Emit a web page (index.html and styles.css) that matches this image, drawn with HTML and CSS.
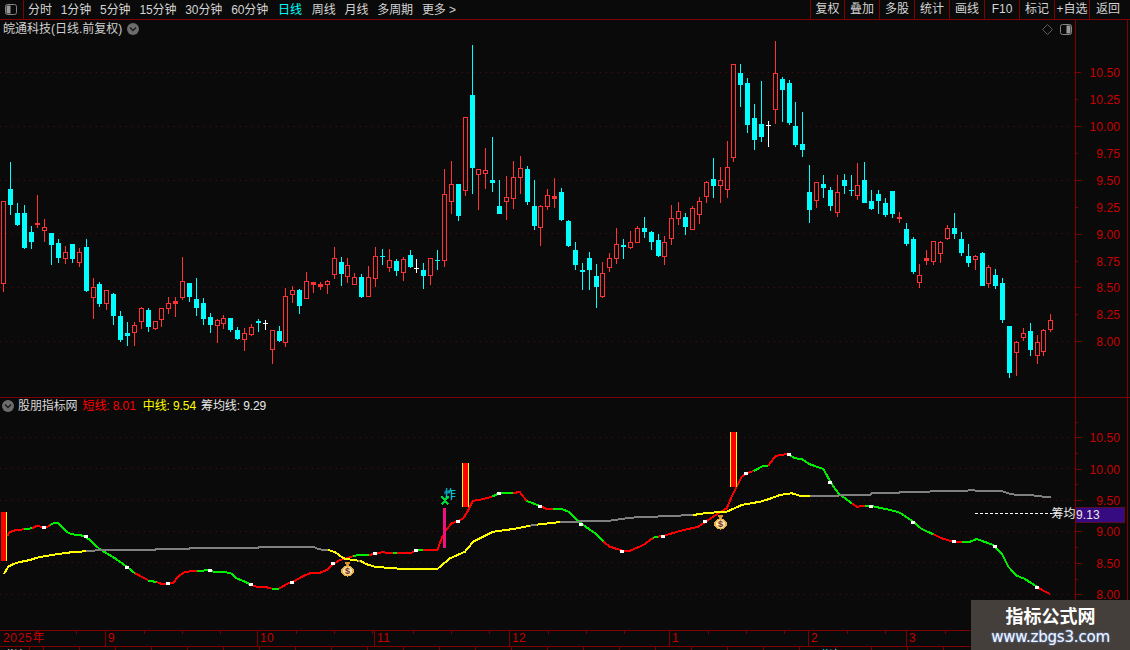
FILE: index.html
```html
<!DOCTYPE html>
<html lang="zh">
<head>
<meta charset="utf-8">
<title>皖通科技</title>
<link rel="stylesheet" href="styles.css">
</head>
<body>
<div class="app">
  <header class="topbar">
    <div class="side-toggle">
      <svg class="panel-icon" width="12" height="11" viewBox="0 0 12 11"><rect class="pi-fill" x="1.5" y="1.5" width="4" height="8"/><rect class="pi-box" x=".5" y=".5" width="11" height="10" rx="2"/></svg>
    </div>
    <nav class="periods">
      <span>分时</span><span>1分钟</span><span>5分钟</span><span>15分钟</span><span>30分钟</span><span>60分钟</span><span class="active">日线</span><span>周线</span><span>月线</span><span>多周期</span><span>更多 &gt;</span>
    </nav>
    <div class="tools">
      <span class="tool first">复权</span><span class="tool">叠加</span><span class="tool">多股</span><span class="tool">统计</span><span class="tool">画线</span><span class="tool">F10</span><span class="tool">标记</span><span class="tool">+自选</span><span class="tool last">返回</span>
    </div>
  </header>

  <section class="panel price-panel">
    <div class="plot">
      <svg id="price" class="chart" viewBox="0 20 1075 377" width="1075" height="377"></svg>
      <div class="chart-title">皖通科技(日线.前复权)
        <svg class="round-btn" width="12" height="12" viewBox="0 0 12 12"><circle class="rb-bg" cx="6" cy="6" r="6"/><path class="rb-ch" d="M3 4.5 6 7.5 9 4.5"/></svg>
      </div>
      <div class="chart-tools">
        <svg width="11" height="11" viewBox="0 0 11 11"><path class="diamond" d="M5.5 .5 10.5 5.5 5.5 10.5 .5 5.5Z"/></svg>
        <svg class="panel-icon" width="12" height="11" viewBox="0 0 12 11"><rect class="pi-fill" x="6.5" y="1.5" width="4" height="8"/><rect class="pi-box" x=".5" y=".5" width="11" height="10" rx="2"/></svg>
      </div>
    </div>
    <div class="axis price-axis">
      <div>10.50</div><div>10.25</div><div>10.00</div><div>9.75</div><div>9.50</div><div>9.25</div><div>9.00</div><div>8.75</div><div>8.50</div><div>8.25</div><div>8.00</div>
    </div>
    <div class="edge"></div>
  </section>

  <section class="panel ind-panel">
    <div class="plot">
      <svg id="ind" class="chart" viewBox="0 398 1075 232" width="1075" height="232">
        <defs>
          <symbol id="bag" viewBox="0 0 14 16">
            <path class="bag-neck" d="M4 0.5h6L8.6 4.5H5.4Z"/>
            <ellipse class="bag-body" cx="7" cy="10" rx="6.4" ry="5.6"/>
            <ellipse class="bag-in" cx="7" cy="10" rx="4.6" ry="4"/>
            <text class="bag-sign" x="7" y="13.4" text-anchor="middle">$</text>
          </symbol>
        </defs>
        <g id="ind-grid"></g>
        <g id="ind-lines"></g>
        <rect class="bar-edge" x="6" y="512" width="1" height="49"/>
        <rect class="bar-red" x="1" y="512" width="5" height="49"/>
        <rect class="bar-edge" x="462" y="463" width="7" height="44"/>
        <rect class="bar-red" x="463" y="463" width="5" height="44"/>
        <rect class="bar-edge" x="730" y="432" width="7" height="55"/>
        <rect class="bar-red" x="731" y="432" width="5" height="55"/>
        <rect class="bar-pink" x="443" y="508" width="3" height="40"/>
        <text class="zha" x="444" y="499">炸</text>
        <path class="cross-x" d="M441.5 496.5 448.5 504.5M448.5 496.5 441.5 504.5"/>
        <use href="#bag" x="340.5" y="561" width="14" height="16"/>
        <use href="#bag" x="713.5" y="514" width="14" height="16"/>
        <line class="dash" x1="975" y1="513.5" x2="1052" y2="513.5"/>
        <text class="avg-tag" x="1051.5" y="518">筹均</text>
      </svg>
      <div class="legend">
        <svg class="round-btn" width="12" height="12" viewBox="0 0 12 12"><circle class="rb-bg" cx="6" cy="6" r="6"/><path class="rb-ch" d="M3 4.5 6 7.5 9 4.5"/></svg>
        <span class="lg-name">股朋指标网</span>
        <span class="lg-red">短线: 8.01</span>
        <span class="lg-yellow">中线: 9.54</span>
        <span class="lg-white">筹均线: 9.29</span>
      </div>
    </div>
    <div class="axis ind-axis">
      <div>10.50</div><div>10.00</div><div>9.50</div><div>9.00</div><div>8.50</div><div>8.00</div>
      <span class="price-tag">9.13</span>
    </div>
    <div class="edge"></div>
  </section>

  <div class="dates">
    <span class="d d-y">2025年</span><span class="d d-9">9</span><span class="d d-10">10</span><span class="d d-11">11</span><span class="d d-12">12</span><span class="d d-1">1</span><span class="d d-2">2</span><span class="d d-3">3</span>
  </div>
  <div class="tabs"><span class="tab-first">指标</span><span class="tab-cyan">指标</span></div>

  <aside class="watermark">
    <div class="wm-title">指标公式网</div>
    <div class="wm-url">www.zbgs3.com</div>
  </aside>
</div>
<script src="chart.js"></script>
</body>
</html>
```
FILE: styles.css
```css
* { box-sizing: border-box; }
html, body { margin: 0; height: 100%; overflow: hidden; background: #0a0a0a; }
body { font: 12px/16px "Liberation Sans", "Noto Sans CJK SC", sans-serif; color: #d4d4d4; }
.app { position: relative; width: 1130px; height: 650px; display: flex; flex-direction: column; overflow: hidden; }

.topbar { flex: 0 0 20px; display: flex; align-items: stretch; border-bottom: 1px solid #800000; padding-right: 4px; }
.side-toggle { flex: 0 0 24px; border-right: 1px solid #800000; display: flex; align-items: center; padding-left: 5px; }
.periods { display: flex; align-items: center; gap: 9px; padding-left: 4px; letter-spacing: -.12px; }
.periods .active { color: #00ffff; margin-left: 1px; margin-right: 1px; }
.tools { margin-left: auto; display: flex; }
.tool { flex: 0 0 35px; border-left: 1px solid #800000; text-align: center; line-height: 19px; }
.tool.first { flex-basis: 34px; }
.tool.last { flex-basis: 37px; }
.pi-box { fill: none; stroke: #858585; }
.pi-fill { fill: #9a9a9a; }

.panel { display: grid; grid-template-columns: 1075px 52px 3px; }
.price-panel { flex: 0 0 378px; height: 378px; border-bottom: 1px solid #800000; }
.ind-panel { flex: 0 0 232px; }
.plot { position: relative; overflow: hidden; }
.chart { display: block; shape-rendering: crispEdges; }

.chart-title { position: absolute; top: 1px; left: 3px; display: flex; align-items: center; gap: 5px; white-space: nowrap; color: #cfcfcf; }
.round-btn { flex: none; }
.rb-bg { fill: #6c6c6c; }
.rb-ch { fill: none; stroke: #1c1c1c; stroke-width: 1.4; }
.chart-tools { position: absolute; top: 4px; right: 3px; display: flex; gap: 7px; }
.diamond { fill: none; stroke: #5e5e5e; }

.legend { position: absolute; top: 0; left: 2px; display: flex; align-items: center; gap: 7px; white-space: nowrap; letter-spacing: -.1px; }
.lg-name { margin-left: -3px; margin-right: -2px; color: #d8d8d8; }
.lg-red { color: #ff0000; }
.lg-yellow { color: #ffff00; margin-right: -2px; }
.lg-white { color: #e8e8e8; }

.axis { position: relative; border-left: 1px solid #800000; display: flex; flex-direction: column; color: #c80000; letter-spacing: .1px; }
.axis div { position: relative; display: flex; align-items: center; justify-content: flex-end; padding: 2px 7px 0 0; }
.axis div::before { content: ""; position: absolute; left: 0; top: 50%; width: 5px; height: 1px; background: #800000; }
.price-axis { padding-top: 38.85px; }
.price-axis div { flex: 0 0 26.9px; }
.price-axis div:nth-child(even)::before { width: 2px; }
.ind-axis { padding-top: 23.6px; }
.ind-axis div { flex: 0 0 31.4px; }
.ind-axis div::after { content: ""; position: absolute; left: 0; top: 0; width: 2px; height: 1px; background: #800000; }
.edge { border-left: 1px solid #800000; }
.price-tag { position: absolute; left: 0; right: 2px; top: 109px; height: 16px; line-height: 15px; background: #360a80; border: 1px solid #5a0c2c; border-left: 0; color: #e8e8e8; }

.dates { flex: 0 0 17px; display: flex; border-top: 1px solid #800000; border-bottom: 1px solid #800000; color: #c80000; line-height: 15px; letter-spacing: .4px; }
.d { padding-left: 2px; border-left: 1px solid #800000; background: linear-gradient(#800000, #800000) 38px 0 / 1px 3px no-repeat, linear-gradient(#800000, #800000) 76px 0 / 1px 3px no-repeat, linear-gradient(#800000, #800000) 114px 0 / 1px 3px no-repeat; }
.d-y { flex: 0 0 105px; border-left: 0; padding-left: 3px; letter-spacing: .7px; }
.d-9 { flex: 0 0 152px; }
.d-10 { flex: 0 0 117px; }
.d-11 { flex: 0 0 135px; }
.d-12 { flex: 0 0 160px; }
.d-1 { flex: 0 0 139px; }
.d-2 { flex: 0 0 98px; }
.d-3 { flex: 1; }

.tabs { flex: 1; display: flex; overflow: hidden; line-height: 16px; padding-top: 1px; color: #e0e0e0; background: repeating-linear-gradient(90deg, #800000 0 1px, transparent 1px 36px) 43px 0; }
.tab-first { padding-left: 6px; }
.tab-cyan { margin-left: 791px; color: #00ffff; }

.watermark { position: absolute; right: 0; bottom: 0; width: 159px; height: 50px; background: #453f3c; color: #fff; text-align: center; }
.wm-title { font: bold 18px/24px "Noto Sans CJK SC", sans-serif; margin-top: 3px; }
.wm-url { font: 15px/20px "DejaVu Sans", sans-serif; letter-spacing: -.2px; color: #f2f6ff; text-shadow: 0 0 2px #6fa8ff; white-space: nowrap; }

/* chart marks */
.grid-line { stroke: #560a0a; stroke-width: 1; stroke-dasharray: 1 5; }
.c-body { fill: #00ffff; }
.r-fill { fill: #ff3333; }
.w-fill { fill: #ffffff; }
.r-body { fill: #0a0a0a; stroke: #ff3333; stroke-width: 1; }
.ln { fill: none; stroke-width: 2; stroke-linejoin: round; }
.ln-r { stroke: #ff0000; }
.ln-g { stroke: #00ee00; }
.ln-y { stroke: #ffff00; }
.ln-s { stroke: #808080; }
.mark { fill: #ffffff; }
.bar-red { fill: #ff0000; }
.bar-edge { fill: #ffff00; }
.bar-pink { fill: #f01080; }
.zha { fill: #00e5ff; font: 12px "Noto Sans CJK SC", sans-serif; }
.cross-x { fill: none; stroke: #00d838; stroke-width: 2; }
.dash { stroke: #ffffff; stroke-dasharray: 3 2; }
.avg-tag { fill: #eeeeee; font: 12px "Noto Sans CJK SC", sans-serif; }
.bag-neck { fill: #d89030; }
.bag-body { fill: #e8b040; }
.bag-in { fill: #f6e4a4; }
.bag-sign { fill: #7a2a2a; font: bold 9px "Liberation Sans", sans-serif; }
```
FILE: chart.js
```js
var NS = 'http://www.w3.org/2000/svg';
function el(parent, name, cls, attrs) {
  var n = document.createElementNS(NS, name);
  n.setAttribute('class', cls);
  for (var k in attrs) n.setAttribute(k, attrs[k]);
  parent.appendChild(n);
  return n;
}
var price = document.getElementById('price');
[72, 126, 180, 233, 287, 341].forEach(function (y) {
  el(price, 'line', 'grid-line', { x1: 0, x2: 1075, y1: y + .5, y2: y + .5 });
});
var indGrid = document.getElementById('ind-grid');
[437, 468, 500, 531, 562, 594].forEach(function (y) {
  el(indGrid, 'line', 'grid-line', { x1: 0, x2: 1075, y1: y + .5, y2: y + .5 });
});

/* candles: [x, kind, wickTop, wickBottom, bodyTop, bodyBottom], read at 3x from the chart */
var groups = [
  { x0: 0, y0: 150, d: [
    [10,'r',153,426,153,401],[31,'c',36,195,117,165],[52,'c',159,228,189,225],[73,'c',165,298,189,294],[94,'c',228,297,246,276],
    [112,'r',135,234,219,225],[133,'r',207,276,231,243],[154,'c',249,345,249,285],[175,'c',267,339,279,324],[196,'r',288,342,306,327],
    [217,'c',282,339,282,327],[238,'r',294,351,306,339],[259,'c',267,426,291,423],[280,'r',384,507,411,444],[298,'c',396,471,402,462],
    [319,'r',420,480,420,462],[340,'c',429,525,432,498],[361,'c',483,576,498,570],[382,'c',516,588,549,558],[403,'r',516,588,525,549],
    [424,'r',471,537,474,516],[445,'c',474,546,480,531],[466,'r',513,540,513,537],[484,'r',474,531,474,510],[505,'r',441,492,459,477],
    [526,'r',441,501,453,462],[547,'r',321,450,393,444],[568,'c',399,456,399,441],[589,'c',384,498,447,474],[610,'c',444,525,459,507],
    [631,'c',489,549,501,525],[652,'r',507,579,510,528],[670,'r',495,537,504,522],[691,'c',504,546,504,540],[712,'c',531,570,540,567],
    [733,'r',534,603,549,570],[754,'r',522,558,531,555],[775,'c',507,546,513,519],[796,'w',510,540,519,522],[817,'r',540,642,540,600],
    [838,'c',528,576,543,573],[856,'r',414,591,438,579],[877,'r',408,459,420,435]
  ] },
  { x0: 280, y0: 40, d: [
    [58,'c',747,822,750,798],[79,'r',696,777,723,777],[100,'r',726,759,726,735],[121,'r',726,750,732,741],[142,'r',720,762,723,735],
    [163,'r',621,717,654,705],[184,'c',651,738,666,702],[202,'r',654,729,675,711],[223,'r',699,735,711,735],[244,'c',702,774,711,771],
    [265,'r',678,771,711,771],[286,'r',621,741,648,717],[307,'c',627,675,648,651],[328,'r',627,696,660,684],[349,'c',657,708,663,693],
    [370,'r',651,723,657,699],[391,'c',630,684,645,681],[409,'w',657,699,684,687],[430,'c',669,747,690,708],[451,'r',654,735,654,708],
    [472,'c',630,690,660,663],[493,'r',387,681,462,663],[514,'r',363,522,432,486],[535,'c',432,543,432,528],[556,'r',231,468,231,453],
    [577,'c',15,462,165,384],[595,'r',387,510,387,405],[616,'r',324,447,390,402],[637,'c',291,456,420,429],[658,'c',420,522,498,522],
    [679,'r',408,540,471,486],[700,'r',363,507,411,477],[721,'r',348,462,384,414],[742,'c',378,495,387,486],[763,'c',420,570,498,558],
    [781,'r',495,618,498,564],[802,'r',447,510,465,501],[823,'r',414,504,468,477],[844,'c',444,543,456,540],[865,'c',540,621,543,618],
    [886,'c',606,690,630,675]
  ] },
  { x0: 560, y0: 40, d: [
    [67,'c',669,750,690,696],[88,'c',636,750,654,690],[109,'c',672,804,708,741],[127,'r',666,774,699,771],[148,'r',639,696,654,684],
    [169,'r',564,672,612,657],[190,'c',597,657,615,621],[211,'r',573,627,606,624],[232,'r',558,609,564,609],[253,'c',531,594,564,576],
    [274,'c',573,630,576,606],[295,'c',582,651,600,648],[313,'r',588,675,606,651],[334,'r',495,615,534,597],[355,'r',486,555,513,537],
    [376,'c',519,585,531,561],[397,'r',498,570,504,570],[418,'r',471,552,483,525],[439,'r',423,489,426,471],[460,'c',354,474,417,438],
    [481,'r',381,489,420,437],[502,'r',303,474,381,450],[520,'r',72,366,72,354],[541,'c',72,201,99,135],[562,'c',114,279,129,255],
    [583,'c',192,330,234,300],[604,'c',123,306,252,291],[625,'w',243,321,255,258],[646,'r',3,252,99,210],[667,'c',111,246,117,150],
    [688,'c',120,255,129,249],[706,'c',186,321,258,315],[727,'c',216,351,312,330],[748,'c',375,549,456,510],[769,'r',426,504,426,483],
    [790,'c',405,474,432,444],[811,'c',441,513,450,498],[832,'r',405,531,456,519]
  ] },
  { x0: 820, y0: 150, d: [
    [73,'c',72,132,90,108],[94,'c',75,138,120,123],[112,'r',39,150,105,138],[133,'c',36,159,90,159],[154,'c',120,180,153,177],
    [175,'c',120,192,132,153],[196,'c',144,201,159,195],[217,'c',123,204,123,192],[238,'r',186,219,201,207],[259,'c',219,288,237,282],
    [280,'c',261,372,267,366],[298,'r',342,414,375,399],[319,'r',300,345,324,333],[340,'r',273,345,273,336],[361,'r',273,339,276,312],
    [382,'r',225,270,234,267],[403,'c',189,267,234,252],[424,'c',246,318,267,309],[445,'c',282,351,318,339],[466,'r',315,360,318,330],
    [487,'c',306,408,309,408],[505,'r',345,414,351,402],[526,'c',357,417,375,408],[547,'c',384,519,399,510],[568,'c',528,684,528,669],
    [589,'r',573,678,576,609],[610,'r',534,573,549,564],[631,'c',519,618,543,600],[652,'r',555,642,576,618],[670,'r',537,618,540,606],
    [691,'r',492,546,510,540]
  ] }
];
groups.forEach(function (g) {
  g.d.forEach(function (k) {
    var c = Math.floor(g.x0 + k[0] / 3);
    var Y = function (z) { return Math.round(g.y0 + z / 3); };
    var wt = Y(k[2]), wb = Y(k[3]), bt = Y(k[4]), bb = Y(k[5]);
    var solid = k[1] === 'c' ? 'c-body' : k[1] === 'w' ? 'w-fill' : 'r-fill';
    el(price, 'rect', solid, { x: c, y: wt, width: 1, height: wb - wt });
    if (k[1] === 'r' && bb - bt > 3) {
      el(price, 'rect', 'r-body', { x: c - 1.5, y: bt + .5, width: 4, height: bb - bt - 1 });
    } else {
      el(price, 'rect', solid, { x: c - 2, y: bt, width: 5, height: Math.max(1, bb - bt) });
    }
  });
});

/* indicator lines: [class, x0, y0, points...] read at 3x from the chart */
var lines = [
  ['r',0,390,[21,438,30,426,45,421,72,418]],
  ['g',0,390,[72,418,96,415]],
  ['r',0,390,[96,415,110,408,125,410,140,412,150,405]],
  ['g',0,390,[150,405,160,400,175,400,190,415,200,426,215,433,240,435,255,440,270,450,285,465,300,478,320,490,345,505,380,530,405,550]],
  ['r',0,390,[405,550,440,568,445,572]],
  ['g',0,390,[445,572,470,576]],
  ['r',0,390,[470,576,485,582,520,578,535,560,550,548,570,544,590,544]],
  ['g',0,390,[590,544,625,540,640,545,690,548,710,565,730,573,755,585]],
  ['r',0,390,[755,585,770,590,800,592,815,596]],
  ['g',0,390,[815,596,838,596]],
  ['r',0,390,[838,596,860,582,880,575,910,558,930,550,960,548,980,540,1000,522,1020,510,1040,505,1060,498]],
  ['g',0,390,[1060,498,1080,494]],
  ['g',360,420,[0,404,28,405]],
  ['r',360,420,[28,405,45,401,65,397,100,399]],
  ['g',360,420,[100,399,110,399]],
  ['r',360,420,[110,399,155,398,170,390]],
  ['g',360,420,[170,390,190,389]],
  ['r',360,420,[190,390,232,390,245,355,258,330,275,310,295,303,310,295,325,270,338,243,370,237,395,230]],
  ['g',360,420,[395,230,418,220,460,218]],
  ['r',360,420,[460,218,480,217,500,243]],
  ['g',360,420,[500,243,540,258]],
  ['r',360,420,[540,258,560,267,580,266]],
  ['g',360,420,[580,266,605,267,625,275,650,300,670,315,705,340,730,365]],
  ['r',360,420,[730,365,750,380,790,393,810,392,850,375,880,353]],
  ['g',360,420,[880,353,895,350]],
  ['r',360,420,[895,350,913,347,960,333,1015,320,1040,303,1070,283,1100,265,1115,230,1130,200,1145,170,1160,160,1180,153]],
  ['g',360,420,[1180,153,1200,143]],
  ['g',760,440,[0,80,25,77]],
  ['r',760,440,[25,77,45,50,60,44,85,43]],
  ['g',760,440,[85,43,105,55,125,57,150,73,190,87,200,105,212,127,235,160,275,190]],
  ['r',760,440,[275,190,290,200,315,198]],
  ['g',760,440,[315,198,335,198,400,212,420,218,445,235,460,245,485,267,520,283]],
  ['r',760,440,[520,283,545,295,570,302,605,307]],
  ['g',760,440,[605,307,630,305,650,297,700,315,725,340,745,380,770,407,795,417,830,440]],
  ['r',760,440,[830,440,850,452,870,462]],
  ['y',0,390,[12,552,25,530,40,522,60,516,90,510,115,502,175,492,220,486,258,484]],
  ['s',0,390,[258,484,300,480,465,480,468,477,568,476,570,473,775,473,778,470,940,470,955,478,985,480]],
  ['y',0,390,[985,480,1005,486,1030,505,1060,510,1075,512]],
  ['s',0,390,[1075,512,1080,512]],
  ['y',360,420,[0,422,20,433,45,440,90,444,130,447,232,447,270,415,315,395,340,365,400,335,460,327,510,317]],
  ['s',360,420,[510,317,530,314]],
  ['y',360,420,[530,314,600,306]],
  ['s',360,420,[600,306,750,302,810,293,1000,285]],
  ['y',360,420,[1000,285,1040,279,1100,275,1145,255,1200,245]],
  ['y',760,440,[0,185,25,178,60,165,95,160,120,167,150,168]],
  ['s',760,440,[150,168,330,165,335,160,415,160,420,157,500,157,520,152,620,152,635,149,650,153,725,153,745,160,770,165,810,165,850,170,873,171]]
];
var indLines = document.getElementById('ind-lines');
lines.forEach(function (l) {
  var pts = [];
  for (var i = 0; i < l[3].length; i += 2) {
    pts.push((l[1] + l[3][i] / 3).toFixed(1) + ',' + (l[2] + l[3][i + 1] / 3).toFixed(1));
  }
  el(indLines, 'polyline', 'ln ln-' + l[0], { points: pts.join(' ') });
});

/* white pivot markers [x, y] in page pixels */
[[44,527],[86,536],[127,567],[168,583],[210,570],[251,584],[292,582],[333,563],[375,553],[416,550],[458,521],
 [499,493],[540,506],[581,524],[622,551],[663,536],[705,521],[746,473],[789,454],[830,482],[871,506],[913,522],[954,541],[995,546],[1037,587]
].forEach(function (m) {
  el(indLines, 'rect', 'mark', { x: m[0] - 2, y: m[1] - 1, width: 4, height: 3 });
});
```
